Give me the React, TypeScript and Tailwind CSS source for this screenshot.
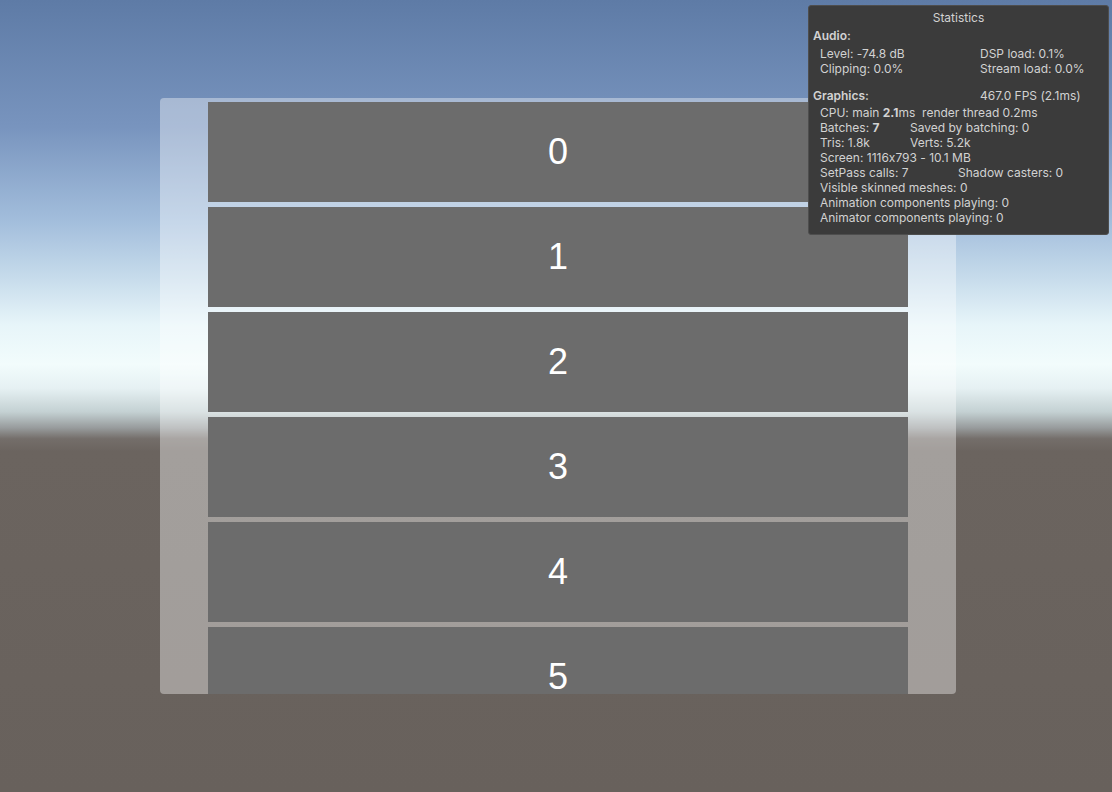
import React from 'react'

const items = [0, 1, 2, 3, 4, 5]

function Row({ children, className = '' }: { children: React.ReactNode; className?: string }) {
  return <div className={`flex h-[15px] items-center leading-[15px] whitespace-nowrap ${className}`}>{children}</div>
}

function Statistics() {
  return (
    <div className="absolute left-[808px] top-[5px] h-[230px] w-[301px] rounded-[3px] border border-[#4e4e4e] bg-[#3b3b3b] text-[12px] text-[#d2d2d2] [font-family:Inter,'Noto_Sans',sans-serif] [font-feature-settings:'calt'_0]">
      <div className="pt-[4px] text-center leading-[15px]">Statistics</div>
      <Row className="mt-[3px] pl-[4px] font-semibold">Audio:</Row>
      <div className="mt-[3px] pl-[11px]">
        <Row>
          <span className="w-[160px]">Level: -74.8 dB</span>
          <span>DSP load: 0.1%</span>
        </Row>
        <Row>
          <span className="w-[160px]">Clipping: 0.0%</span>
          <span>Stream load: 0.0%</span>
        </Row>
      </div>
      <Row className="mt-[12px] pl-[4px]">
        <span className="w-[167px] font-semibold">Graphics:</span>
        <span>467.0 FPS (2.1ms)</span>
      </Row>
      <div className="mt-[2px] pl-[11px]">
        <Row>
          CPU: main&nbsp;<b>2.1</b>ms&nbsp;&nbsp;render thread 0.2ms
        </Row>
        <Row>
          <span className="w-[90px]">
            Batches: <b>7</b>
          </span>
          <span>Saved by batching: 0</span>
        </Row>
        <Row>
          <span className="w-[90px]">Tris: 1.8k</span>
          <span>Verts: 5.2k</span>
        </Row>
        <Row>Screen: 1116x793 - 10.1 MB</Row>
        <Row>
          <span className="w-[138px]">SetPass calls: 7</span>
          <span>Shadow casters: 0</span>
        </Row>
        <Row>Visible skinned meshes: 0</Row>
        <Row>Animation components playing: 0</Row>
        <Row>Animator components playing: 0</Row>
      </div>
    </div>
  )
}

export default function App() {
  return (
    <div className="relative h-[792px] w-[1112px] overflow-hidden bg-[linear-gradient(to_bottom,#5e7ba6_0%,#7894be_16%,#a3bedc_28%,#c6dbeb_35%,#e7f5f9_41%,#f2fcfc_46%,#e6f1f3_49%,#c4d1d3_52%,#989c9d_54%,#746e6a_55.4%,#6b645f_57%,#68615c_100%)]">
      <div className="pl-[160px] pt-[98px]">
        {/* scroll view panel */}
        <div className="h-[596px] w-[796px] overflow-hidden rounded-[4px] bg-white/[0.38] px-[48px] pt-[4px]">
          <div className="flex flex-col gap-[5px]">
            {items.map((n) => (
              <div
                key={n}
                className="flex h-[100px] w-[700px] shrink-0 items-center justify-center bg-[#6c6c6c] text-[36px] text-white [font-family:'Liberation_Sans',Arial,sans-serif]"
              >
                {n}
              </div>
            ))}
          </div>
        </div>
      </div>
      <Statistics />
    </div>
  )
}
